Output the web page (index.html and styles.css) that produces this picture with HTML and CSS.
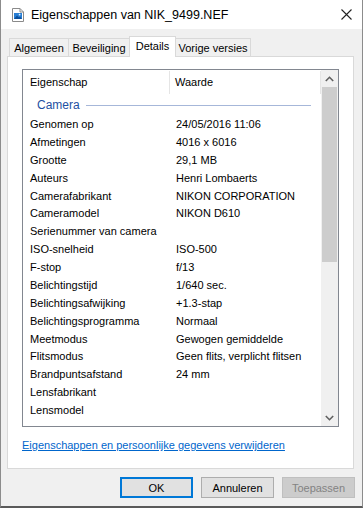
FILE: index.html
```html
<!DOCTYPE html>
<html lang="nl">
<head>
  <meta charset="UTF-8">
  <title>Eigenschappen van NIK_9499.NEF</title>
  <link rel="stylesheet" href="styles.css">
</head>
<body>
  <div class="window">
    <div class="titlebar">
      <svg class="file-icon" width="12" height="14" viewBox="0 0 12 14">
        <path d="M0.5 0.5h7.5l3.5 3.5v9.5h-11z" fill="#fff" stroke="#8a8a8a"/>
        <path d="M8 0.5v3.5h3.5" fill="none" stroke="#8a8a8a"/>
        <rect x="2" y="5" width="8" height="6" fill="#2a7fd4"/>
        <path d="M2 11l3-3.5 2 2 1-1 2 2.5z" fill="#0b4f9c"/>
        <circle cx="7.6" cy="6.6" r="0.9" fill="#dff0ff"/>
      </svg>
      <span class="title">Eigenschappen van NIK_9499.NEF</span>
      <svg class="close" width="11" height="11" viewBox="0 0 11 11">
        <path d="M0.5 0.5l10 10M10.5 0.5l-10 10" stroke="#222" stroke-width="1.1"/>
      </svg>
    </div>

    <div class="body">
      <div class="tabs">
        <div class="tab tab-general">Algemeen</div>
        <div class="tab tab-security">Beveiliging</div>
        <div class="tab tab-details active">Details</div>
        <div class="tab tab-versions">Vorige versies</div>
      </div>

      <div class="panel">
        <div class="listbox">
          <div class="list">
            <div class="header">
              <div class="col-name">Eigenschap</div>
              <div class="col-value">Waarde</div>
            </div>
            <div class="group">
              <span>Camera</span>
              <div class="group-line"></div>
            </div>
            <div class="rows">
              <div class="row"><div class="col-name">Genomen op</div><div class="col-value">24/05/2016 11:06</div></div>
              <div class="row"><div class="col-name">Afmetingen</div><div class="col-value">4016 x 6016</div></div>
              <div class="row"><div class="col-name">Grootte</div><div class="col-value">29,1 MB</div></div>
              <div class="row"><div class="col-name">Auteurs</div><div class="col-value">Henri Lombaerts</div></div>
              <div class="row"><div class="col-name">Camerafabrikant</div><div class="col-value">NIKON CORPORATION</div></div>
              <div class="row"><div class="col-name">Cameramodel</div><div class="col-value">NIKON D610</div></div>
              <div class="row"><div class="col-name">Serienummer van camera</div><div class="col-value"></div></div>
              <div class="row"><div class="col-name">ISO-snelheid</div><div class="col-value">ISO-500</div></div>
              <div class="row"><div class="col-name">F-stop</div><div class="col-value">f/13</div></div>
              <div class="row"><div class="col-name">Belichtingstijd</div><div class="col-value">1/640 sec.</div></div>
              <div class="row"><div class="col-name">Belichtingsafwijking</div><div class="col-value">+1.3-stap</div></div>
              <div class="row"><div class="col-name">Belichtingsprogramma</div><div class="col-value">Normaal</div></div>
              <div class="row"><div class="col-name">Meetmodus</div><div class="col-value">Gewogen gemiddelde</div></div>
              <div class="row"><div class="col-name">Flitsmodus</div><div class="col-value">Geen flits, verplicht flitsen</div></div>
              <div class="row"><div class="col-name">Brandpuntsafstand</div><div class="col-value">24 mm</div></div>
              <div class="row"><div class="col-name">Lensfabrikant</div><div class="col-value"></div></div>
              <div class="row"><div class="col-name">Lensmodel</div><div class="col-value"></div></div>
            </div>
          </div>
          <div class="scrollbar">
            <svg class="arrow" width="9" height="6" viewBox="0 0 9 6"><path d="M0.8 5l3.7-3.7 3.7 3.7" fill="none" stroke="#606060" stroke-width="1.6"/></svg>
            <div class="track"><div class="thumb"></div></div>
            <svg class="arrow" width="9" height="6" viewBox="0 0 9 6"><path d="M0.8 1l3.7 3.7 3.7-3.7" fill="none" stroke="#606060" stroke-width="1.6"/></svg>
          </div>
        </div>
        <a class="link" href="#">Eigenschappen en persoonlijke gegevens verwijderen</a>
      </div>

      <div class="buttons">
        <button class="btn default">OK</button>
        <button class="btn">Annuleren</button>
        <button class="btn disabled">Toepassen</button>
      </div>
    </div>
  </div>
</body>
</html>
```

FILE: styles.css
```css
/* Base */
* { box-sizing: border-box; margin: 0; padding: 0; }
body {
  font-family: "Liberation Sans", Arial, sans-serif;
  font-size: 11px;
  color: #000;
  background: #f0f0f0;
}

/* Window */
.window {
  width: 363px;
  height: 508px;
  border: 1px solid #8c8c8c;
  border-top: none;
  border-bottom: 2px solid #5a5a5a;
  background: #f0f0f0;
  display: flex;
  flex-direction: column;
}
.titlebar {
  height: 29px;
  background: #fff;
  display: flex;
  align-items: center;
  padding: 0 10px 0 11px;
}
.file-icon { margin-top: 1px; }
.title {
  margin-left: 7px;
  font-size: 12.5px;
  flex: 1;
}

/* Tabs */
.body {
  flex: 1;
  display: flex;
  flex-direction: column;
}
.tabs {
  display: flex;
  align-items: flex-end;
  height: 27px;
  margin-left: 8px;
}
.tab {
  height: 18px;
  border: 1px solid #d9d9d9;
  border-bottom: none;
  border-right: none;
  background: #f0f0f0;
  line-height: 18px;
  text-align: center;
  white-space: nowrap;
}
.tab-general { width: 59px; }
.tab-security { width: 61px; }
.tab-details { width: 47px; }
.tab-versions { width: 75px; border-right: 1px solid #d9d9d9; }
.tab.active {
  height: 21px;
  background: #fff;
  border-right: 1px solid #d9d9d9;
  line-height: 18px;
  margin-bottom: -1px;
  position: relative;
  z-index: 1;
}
.tab.active + .tab { border-left: none; }

/* Panel */
.panel {
  margin: 0 8px 0 6px;
  height: 413px;
  background: #fff;
  border: 1px solid #d9d9d9;
  padding: 12px 14px 0 14px;
}
.listbox {
  height: 358px;
  border: 1px solid #828790;
  display: flex;
}
.list {
  flex: 1;
  overflow: hidden;
}
.header {
  display: flex;
  height: 25px;
  align-items: center;
}
.header .col-name {
  width: 147px;
  border-right: 1px solid #e5e5e5;
  height: 23px;
  line-height: 23px;
}
.header .col-value {
  flex: 1;
  height: 23px;
  line-height: 23px;
  padding-left: 5px;
  border-right: 1px solid #e5e5e5;
}
.col-name {
  width: 147px;
  padding-left: 7px;
  white-space: nowrap;
}
.col-value {
  flex: 1;
  padding-left: 6px;
  white-space: nowrap;
}
.group {
  display: flex;
  align-items: center;
  height: 19px;
  padding-left: 14px;
  color: #1e50a2;
  font-size: 12px;
}
.group-line {
  flex: 1;
  height: 1px;
  background: #a6b7d9;
  margin: 1px 10px 0 6px;
}
.rows { padding-top: 2px; }
.row {
  display: flex;
  height: 17.875px;
  line-height: 17.875px;
}

/* Scrollbar */
.scrollbar {
  width: 17px;
  background: #f0f0f0;
  display: flex;
  flex-direction: column;
  align-items: center;
}
.arrow { margin: 6px 0 5px; }
.track {
  flex: 1;
  width: 100%;
}
.thumb {
  margin: 0 1px;
  height: 175px;
  background: #cdcdcd;
}

/* Link */
.link {
  display: block;
  margin-top: 12px;
  color: #0066cc;
  text-decoration: underline;
  white-space: nowrap;
}

/* Buttons */
.buttons {
  display: flex;
  justify-content: flex-end;
  gap: 8px;
  padding: 8px 7px 0 0;
}
.btn {
  width: 73px;
  height: 21px;
  font-family: inherit;
  font-size: 11px;
  background: #e1e1e1;
  border: 1px solid #adadad;
  color: #000;
}
.btn.default {
  border: 2px solid #0078d7;
}
.btn.disabled {
  background: #cccccc;
  border-color: #bfbfbf;
  color: #838383;
}
```
